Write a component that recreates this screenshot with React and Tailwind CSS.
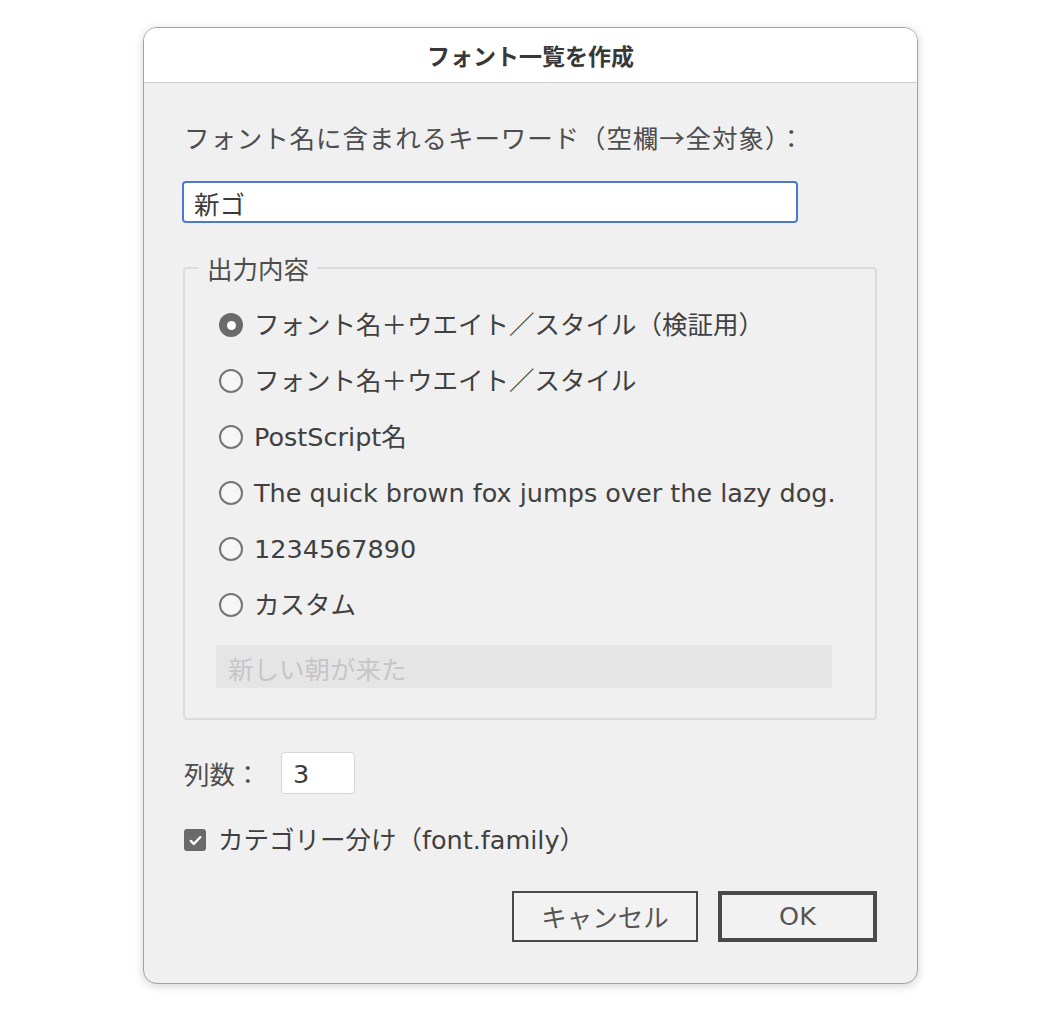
const FONT = "font-['Noto_Sans_CJK_JP','Liberation_Sans',sans-serif]";
const LATIN = "font-['DejaVu_Sans','Noto_Sans_CJK_JP',sans-serif]";

const options = [
  'フォント名＋ウエイト／スタイル（検証用）',
  'フォント名＋ウエイト／スタイル',
  'PostScript名',
  'The quick brown fox jumps over the lazy dog.',
  '1234567890',
  'カスタム',
];

function Radio({ checked }) {
  if (checked) {
    return (
      <span className="w-[24px] h-[24px] rounded-full bg-[#6a6a6a] flex items-center justify-center shrink-0">
        <span className="w-[9px] h-[9px] rounded-full bg-white" />
      </span>
    );
  }
  return <span className="w-[24px] h-[24px] rounded-full border-2 border-[#757575] bg-[#f6f6f6] shrink-0" />;
}

export default function App() {
  return (
    <div className={`min-h-[1011px] bg-white flex justify-center pt-[27px] ${FONT}`}>
      <div className="w-[775px] h-[957px] rounded-[14px] border border-[#a3a3a3] bg-[#f0f0f0] overflow-hidden shadow-[0_2px_10px_rgba(0,0,0,0.18)] flex flex-col">
        <div className="h-[55px] bg-white border-b border-[#cdcdcd] flex items-center justify-center">
          <span className="text-[23px] font-bold text-[#383838]">フォント一覧を作成</span>
        </div>

        <div className="px-[40px] pt-[38px] text-[#434343]">
          <p className="text-[25.5px] leading-[32px] tracking-[0.9px] text-[#4d4d4d]">フォント名に含まれるキーワード（空欄→全対象）：</p>

          <div className="mt-[28px] w-[616px] -ml-[2px] h-[42px] bg-white border-2 border-[#4a78d3] rounded-[4px] flex items-center pl-[10px] pt-[3px] text-[25.5px] text-[#3a3a3a]">
            新ゴ
          </div>

          <fieldset className="mt-[29px] border-2 border-[#dcdcdc] rounded-[4px] pl-[34px] pr-[20px] pb-[30px] -ml-[1px] w-[694px]">
            <legend className="-ml-[20px] px-[8px] text-[25.5px] leading-[32px] text-[#4d4d4d]">出力内容</legend>
            <div className="pt-[13px] flex flex-col">
              {options.map((label, i) => (
                <div key={label} className="h-[56px] flex items-center gap-[11px]">
                  <Radio checked={i === 0} />
                  <span className={`text-[25.5px] leading-[32px] text-[#404040] whitespace-nowrap ${LATIN}`}>{label}</span>
                </div>
              ))}
            </div>
            <div className="mt-[12px] w-[616px] h-[43px] bg-[#e5e5e5] rounded-[3px] flex items-center pl-[12px] pt-[3px] text-[25.5px] text-[#c6c6c6] -ml-[3px]">
              新しい朝が来た
            </div>
          </fieldset>

          <div className="mt-[32px] flex items-center">
            <span className="w-[97px] text-[25.5px] leading-[32px] text-[#4d4d4d]">列数：</span>
            <div className={`w-[74px] h-[42px] bg-white border border-[#d6d6d6] rounded-[4px] flex items-center pl-[11px] pt-[2px] text-[25.5px] text-[#3a3a3a] ${LATIN}`}>
              3
            </div>
          </div>

          <div className="mt-[30px] h-[32px] flex items-center gap-[12px]">
            <span className="w-[22px] h-[22px] rounded-[3px] bg-[#6a6a6a] flex items-center justify-center">
              <svg width="15" height="15" viewBox="0 0 16 16" fill="none" stroke="white" strokeWidth="2.6" strokeLinecap="round" strokeLinejoin="round">
                <path d="M3 8.5l3.2 3.2L13 4.5" />
              </svg>
            </span>
            <span className={`text-[25.5px] leading-[32px] text-[#404040] ${LATIN}`}>カテゴリー分け（font.family）</span>
          </div>

          <div className="mt-[35px] flex justify-end gap-[20px]">
            <button className="w-[186px] h-[51px] border-2 border-[#4a4a4a] bg-[#f2f2f2] text-[25.5px] text-[#555555]">
              キャンセル
            </button>
            <button className={`w-[159px] h-[51px] border-4 border-[#4a4a4a] bg-[#f2f2f2] text-[25.5px] text-[#555555] ${LATIN}`}>
              OK
            </button>
          </div>
        </div>
      </div>
    </div>
  );
}
